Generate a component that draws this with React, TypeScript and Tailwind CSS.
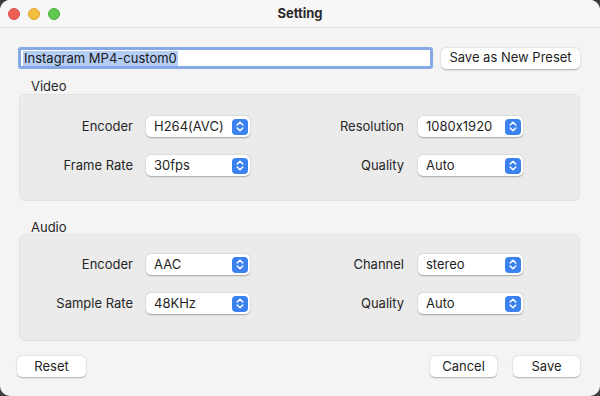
import React from "react";

function Stepper() {
  return (
    <div className="w-[16px] h-[16px] rounded-[4px] bg-[#3b82f0] flex items-center justify-center">
      <svg width="8" height="11" viewBox="0 0 8 11" fill="none">
        <path d="M1.2 4 L4 1.3 L6.8 4" stroke="white" strokeWidth="1.5" strokeLinecap="round" strokeLinejoin="round" />
        <path d="M1.2 7 L4 9.7 L6.8 7" stroke="white" strokeWidth="1.5" strokeLinecap="round" strokeLinejoin="round" />
      </svg>
    </div>
  );
}

function Popup({ value, width }: { value: string; width: string }) {
  return (
    <div
      className={`${width} h-[21px] bg-white rounded-[5px] shadow-[0_0.5px_1.5px_rgba(0,0,0,0.3)] flex items-center justify-between pl-[8px] pr-[2px]`}
    >
      <span className="text-[13px] text-[#1f1f1f] leading-none">{value}</span>
      <Stepper />
    </div>
  );
}

function Row({ l1, v1, l2, v2 }: { l1: string; v1: string; l2: string; v2: string }) {
  return (
    <div className="flex items-center h-[21px]">
      <div className="w-[113px] text-right text-[13px] text-[#262626]">{l1}</div>
      <div className="w-[13px]" />
      <Popup value={v1} width="w-[104px]" />
      <div className="w-[154px] text-right text-[13px] text-[#262626]">{l2}</div>
      <div className="w-[14px]" />
      <Popup value={v2} width="w-[105px]" />
    </div>
  );
}

function Button({ children, width }: { children: React.ReactNode; width: string }) {
  return (
    <div
      className={`${width} h-[21px] bg-white rounded-[5px] shadow-[0_0.5px_1.5px_rgba(0,0,0,0.3)] flex items-center justify-center text-[13px] text-[#1f1f1f]`}
    >
      {children}
    </div>
  );
}

export default function App() {
  return (
    <div
      className="w-[600px] h-[396px] bg-[#3a3d3a] [font-feature-settings:'calt'_0]"
      style={{ fontFamily: "Inter, 'Liberation Sans', sans-serif" }}
    >
      <div className="w-[600px] h-[396px] rounded-[10px] overflow-hidden bg-[#f4f4f4] flex flex-col">
        <div className="h-[28px] bg-[#f7f7f7] border-b border-[#e0e0e0] flex items-center relative shrink-0">
          <div className="flex items-center gap-[8px] pl-[8px]">
            <div className="w-[12px] h-[12px] rounded-full bg-[#ec5f57] border border-[#d65049]" />
            <div className="w-[12px] h-[12px] rounded-full bg-[#f3bd3f] border border-[#dea633]" />
            <div className="w-[12px] h-[12px] rounded-full bg-[#5fc650] border border-[#4cad3f]" />
          </div>
          <div className="absolute inset-0 flex items-center justify-center text-[13px] font-bold text-[#2a2a2a]">
            Setting
          </div>
        </div>

        <div className="flex flex-col px-[20px]">
          <div className="flex items-center mt-[19px] -ml-[2px]">
            <div className="w-[415px] h-[22px] bg-white border-[3px] border-[#86a9e6] rounded-[3px] flex items-center pl-[2px]">
              <span className="text-[13px] text-[#1a1a1a] bg-[#b4cdf4] leading-[15px] px-[1px]">
                Instagram MP4-custom0
              </span>
            </div>
            <div className="ml-[8px]">
              <Button width="w-[139px]">Save as New Preset</Button>
            </div>
          </div>

          <div className="text-[13px] text-[#262626] mt-[9px] ml-[11px] leading-[16px]">Video</div>
          <div className="mt-0 h-[107px] bg-[#ebebeb] border border-[#e2e2e2] rounded-[6px] pt-[21px] flex flex-col gap-[18px] -ml-[1px] w-[561px]">
            <Row l1="Encoder" v1="H264(AVC)" l2="Resolution" v2="1080x1920" />
            <Row l1="Frame Rate" v1="30fps" l2="Quality" v2="Auto" />
          </div>

          <div className="text-[13px] text-[#262626] mt-[18px] ml-[11px] leading-[16px]">Audio</div>
          <div className="-mt-[1px] h-[107px] bg-[#ebebeb] border border-[#e2e2e2] rounded-[6px] pt-[19px] flex flex-col gap-[18px] -ml-[1px] w-[561px]">
            <Row l1="Encoder" v1="AAC" l2="Channel" v2="stereo" />
            <Row l1="Sample Rate" v1="48KHz" l2="Quality" v2="Auto" />
          </div>

          <div className="flex items-center mt-[15px] -ml-[3px]">
            <Button width="w-[69px]">Reset</Button>
            <div className="flex-1" />
            <Button width="w-[67px]">Cancel</Button>
            <div className="w-[16px]" />
            <Button width="w-[67px]">Save</Button>
          </div>
        </div>
      </div>
    </div>
  );
}
